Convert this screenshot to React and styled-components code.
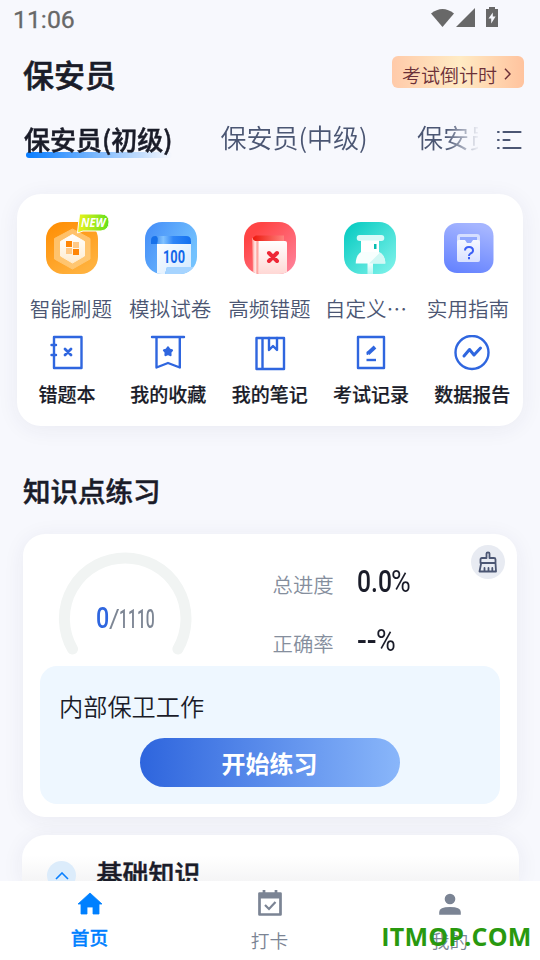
import React from 'react';
import styled, { createGlobalStyle } from 'styled-components';

const cjk = '"Noto Sans CJK SC", sans-serif';

const GlobalStyle = createGlobalStyle`
  * { box-sizing: border-box; }
  body { margin: 0; background: #f7f8fd; font-family: ${cjk}; }
  svg { display: block; flex: none; }
`;

const Screen = styled.div`
  width: 540px;
  height: 960px;
  overflow: hidden;
  display: flex;
  flex-direction: column;
  background: #f7f8fd;
  color: #1a1c29;
`;

const StatusBar = styled.header`
  height: 40px;
  flex: none;
  display: flex;
  align-items: flex-start;
  justify-content: space-between;
  padding: 5px 41px 0 13px;
  color: #686868;
  svg { margin-top: 2px; }
`;

const Clock = styled.time`
  font: 400 24.8px/30px Roboto, sans-serif;
  -webkit-text-stroke: 0.3px currentColor;
`;

const TitleBar = styled.div`
  height: 70px;
  flex: none;
  display: flex;
  align-items: flex-start;
  justify-content: space-between;
  padding: 13px 16px 0 23px;
`;

const PageTitle = styled.h1`
  margin: 0;
  font-size: 31px;
  line-height: 42px;
  font-weight: 500;
  -webkit-text-stroke: 0.6px currentColor;
`;

const Countdown = styled.div`
  width: 132px;
  height: 32px;
  margin-top: 3px;
  padding: 3px 0 0 10px;
  display: flex;
  gap: 7px;
  border-radius: 6px;
  background: linear-gradient(90deg, #ffcaa9, #ffebc4 51%, #ffc39e);
  color: #6c3038;
  font-size: 19px;
  line-height: 32px;
  font-weight: 350;
  svg { margin-top: 9px; }
`;

const TabBar = styled.nav`
  height: 84px;
  flex: none;
  display: flex;
  padding: 8px 18px 0 24px;
`;

const TabList = styled.div`
  width: 454px;
  display: flex;
  gap: 48.5px;
  overflow: hidden;
  mask-image: linear-gradient(90deg, #000 422px, transparent 456px);
`;

const Tab = styled.div`
  position: relative;
  z-index: 0;
  flex: none;
  width: 148px;
  height: 40px;
  white-space: nowrap;
  font-size: 26px;
  line-height: ${p => (p.$active ? 41 : 37)}px;
  font-weight: ${p => (p.$active ? 500 : 350)};
  -webkit-text-stroke: ${p => (p.$active ? 0.5 : 0)}px currentColor;
  color: ${p => (p.$active ? '#1a1c29' : '#4b5673')};
`;

const TabUnderline = styled.i`
  position: absolute;
  z-index: -1;
  left: 1.5px;
  top: 33.5px;
  width: 146px;
  height: 6px;
  border-radius: 3px;
  background: linear-gradient(90deg, #087cff, rgba(8, 124, 255, 0.6) 40%, rgba(8, 124, 255, 0));
`;

const MenuButton = styled.div`
  padding: 11px 0 0 17.5px;
  color: #4b5673;
`;

const Panel = styled.section`
  flex: none;
  background: #fff;
  box-shadow: 0 3px 22px rgba(45, 48, 90, 0.065);
`;

const Shortcuts = styled(Panel)`
  width: 506px;
  height: 232px;
  margin-left: 17px;
  border-radius: 24px;
  padding-top: 28px;
`;

const FeatureRow = styled.div`
  display: grid;
  grid-template-columns: repeat(5, 99.3px);
  padding-left: 5px;
`;

const Feature = styled.div`
  display: flex;
  flex-direction: column;
  align-items: center;
`;

const FeatureIcon = styled.div`
  position: relative;
  width: 52px;
  height: 52px;
`;

const NewBadge = styled.div`
  position: absolute;
  left: 30px;
  top: -9px;
  width: 34px;
  height: 20px;
  svg { overflow: visible; }
`;

const FeatureLabel = styled.div`
  margin-top: 19px;
  transform: translateX(${p => p.$shift || -0.8}px);
  font-size: 20.6px;
  line-height: 30px;
  font-weight: 350;
  color: #4b5673;
  white-space: nowrap;
`;

const ToolRow = styled.div`
  display: grid;
  grid-template-columns: repeat(5, 101.3px);
  margin-top: 11.5px;
  margin-left: -0.6px;
`;

const Tool = styled.div`
  display: flex;
  flex-direction: column;
  align-items: center;
  font-size: 19px;
  line-height: 28px;
  font-weight: 500;
  -webkit-text-stroke: 0.2px currentColor;
  svg { margin-bottom: 9.5px; }
`;

const SectionTitle = styled.h2`
  flex: none;
  margin: 44px 0 24px 23px;
  font-size: 27.5px;
  line-height: 40px;
  font-weight: 500;
  -webkit-text-stroke: 0.5px currentColor;
`;

const Practice = styled(Panel)`
  width: 494px;
  height: 283px;
  margin-left: 23px;
  border-radius: 22px;
  padding: 0 17px;
`;

const Summary = styled.div`
  height: 131.5px;
  display: flex;
  align-items: flex-start;
`;

const Gauge = styled.div`
  width: 134px;
  height: 131px;
  margin-left: 18px;
  display: grid;
  svg, div { grid-area: 1 / 1; }
`;

const GaugeText = styled.div`
  display: flex;
  align-items: baseline;
  padding: 65.5px 0 0 37.5px;
  color: #7d8694;
  font: 400 25px/36px Roboto, sans-serif;
`;

const Narrow = styled.span`
  width: ${p => p.$w}px;
  white-space: nowrap;
  font-weight: ${p => (p.$bold ? 500 : 400)};
  transform: scaleX(${p => p.$x});
  transform-origin: 0 50%;
`;

const Current = styled(Narrow)`
  color: #2f66df;
  font-size: 29.5px;
`;

const Stats = styled.dl`
  width: 198px;
  margin: 31px 0 0 80.500px;
  display: grid;
  grid-template-columns: 84px 1fr;
  grid-auto-rows: 59px;
`;

const StatName = styled.dt`
  padding-top: 4px;
  font-size: 20.4px;
  line-height: 30px;
  font-weight: 350;
  color: #858e9d;
`;

const StatValue = styled.dd`
  margin: 0;
  display: flex;
  font: 400 30.5px/34px Roboto, sans-serif;
`;

const CleanButton = styled.div`
  width: 34px;
  height: 34px;
  flex: none;
  margin: 11px -10px 0 0.5px;
  border-radius: 50%;
  background: #e8ebf2;
  display: grid;
  place-items: center;
`;

const Chapter = styled.div`
  height: 138.5px;
  border-radius: 17px;
  background: #eef7ff;
  padding-top: 23px;
  display: flex;
  flex-direction: column;
  align-items: center;
`;

const ChapterName = styled.div`
  align-self: stretch;
  padding-left: 19px;
  font-size: 24.2px;
  line-height: 34px;
  font-weight: 350;
`;

const StartButton = styled.button`
  width: 260px;
  height: 49px;
  margin-top: 15px;
  padding: 1px 1px 0 0;
  border: 0;
  border-radius: 25px;
  background: linear-gradient(90deg, #2e65dd, #89b6fa);
  color: #fff;
  font: 700 24px/48px ${cjk};
`;

const NextPanel = styled(Panel)`
  width: 497px;
  height: 46px;
  margin: 18px 0 0 22px;
  border-radius: 24px 24px 0 0;
  background: linear-gradient(#fff 45%, #f5f5f6);
  padding: 18px 25px 0;
  display: flex;
  gap: 20.5px;
  overflow: hidden;
`;

const Toggle = styled.div`
  width: 29px;
  height: 29px;
  margin-top: 8px;
  border-radius: 50%;
  background: #dcecfb;
  display: grid;
  place-items: center;
`;

const NextTitle = styled.h3`
  margin: 0;
  font-size: 26px;
  line-height: 40px;
  font-weight: 500;
  -webkit-text-stroke: 0.5px currentColor;
`;

const BottomNav = styled.nav`
  flex: none;
  height: 80px;
  background: #fff;
  display: grid;
  grid-template-columns: repeat(3, 180px);
  position: relative;
`;

const NavItem = styled.div`
  display: flex;
  flex-direction: column;
  align-items: center;
  padding-top: 8px;
  font-size: 18.7px;
  line-height: 28px;
  font-weight: ${p => (p.$active ? 500 : 350)};
  -webkit-text-stroke: ${p => (p.$active ? 0.3 : 0)}px currentColor;
  color: ${p => (p.$active ? '#0080ff' : '#7b8494')};
  span { margin: ${p => (p.$active ? 4 : 6.5)}px 1px 0 0; }
`;

const Watermark = styled.div`
  position: absolute;
  right: 8.500px;
  top: 40px;
  color: #29990f;
  font: 700 25px/30px "Open Sans", sans-serif;
  letter-spacing: 0.2px;
  white-space: nowrap;
`;

const StatusIcons = () => (
  <svg width="68" height="20" viewBox="0 0 68 20" fill="#686868">
    <path d="M0 5.500Q11.500-3.500 23 5.500L11.500 19Z" transform="translate(0 1)" />
    <path d="M25 20L44 1V20Z" />
    <path d="M55 2h3V0h6v2h3v18H55Z" />
    <path d="M61.800 5.500L57.500 11.500H60.200V16.500L64.600 9.500H61.800Z" fill="#f7f8fd" />
  </svg>
);

const NewTag = () => (
  <svg width="34" height="20" viewBox="0 0 34 20">
    <defs>
      <linearGradient id="tag" x2="1"><stop stopColor="#eff31a" /><stop offset=".5" stopColor="#a9ea1c" /><stop offset="1" stopColor="#5fe01a" /></linearGradient>
    </defs>
    <path d="M3.500 1H25Q33 1 33 9T25 18H7L1.500 20Z" fill="url(#tag)" stroke="#fff" strokeWidth="1" />
    <text x="5" y="13.900" textLength="24.500" lengthAdjust="spacingAndGlyphs" fontFamily="Open Sans, sans-serif" fontStyle="italic" fontWeight="700" fontSize="13" fill="#fff">NEW</text>
  </svg>
);

const SmartIcon = () => (
  <svg width="52" height="52" viewBox="0 0 52 52">
    <defs>
      <linearGradient id="or" x2=".6" y2="1"><stop stopColor="#ff8c00" /><stop offset="1" stopColor="#ffb13d" /></linearGradient>
      <linearGradient id="hex" x2="0" y2="1"><stop stopColor="#fff" /><stop offset="1" stopColor="#ffecd0" /></linearGradient>
    </defs>
    <rect width="52" height="52" rx="17" fill="url(#or)" />
    <path d="M26.500 7L44 16.500V37L26.500 47L8.500 37V16.500Z" fill="#ffcf86" opacity=".75" stroke="#ffcf86" strokeLinejoin="round" />
    <path d="M26.500 12.500L38.500 19.500V34L26.500 41L14.500 34V19.500Z" fill="url(#hex)" stroke="url(#hex)" strokeLinejoin="round" />
    <path d="M20 19h6v6h-6ZM27 27h6v6h-6Z" fill="#ff8505" />
    <path d="M27 20h6v6h-6ZM20 26h6v6h-6Z" fill="#ffc987" />
  </svg>
);

const ExamIcon = () => (
  <svg width="52" height="52" viewBox="0 0 52 52">
    <defs>
      <linearGradient id="bl" x2="1" y2=".5"><stop stopColor="#438cf8" /><stop offset="1" stopColor="#73c2fe" /></linearGradient>
      <linearGradient id="roll" x2="1"><stop stopColor="#2378e8" /><stop offset=".3" stopColor="#81c2ff" /><stop offset=".55" stopColor="#2f86f7" /><stop offset="1" stopColor="#1370ef" /></linearGradient>
      <linearGradient id="sheet" x2="1" y2="1"><stop stopColor="#fff" /><stop offset="1" stopColor="#d2e9ff" /></linearGradient>
      <clipPath id="cb"><rect width="52" height="52" rx="17" /></clipPath>
    </defs>
    <g clipPath="url(#cb)">
      <rect width="52" height="52" fill="url(#bl)" />
      <path d="M12 18h34v27H22l-2 7h-8Z" fill="url(#sheet)" />
      <path d="M22 45h28l-3 7H20Z" fill="#a6d4ff" />
      <path d="M10 14h31q5 0 5 5v3H12q0-3-4-1q-4-7 2-7Z" fill="url(#roll)" />
      <path d="M6 19q0-5 5-5q3 1 1 8H6Z" fill="#1670ea" />
    </g>
    <text x="18" y="41" textLength="22" lengthAdjust="spacingAndGlyphs" fontFamily="Roboto, sans-serif" fontSize="17.500" fontWeight="700" fill="#1267ea">100</text>
  </svg>
);

const MistakeIcon = () => (
  <svg width="52" height="52" viewBox="0 0 52 52">
    <defs>
      <linearGradient id="re" x2="1" y2="1"><stop offset=".2" stopColor="#ff4545" /><stop offset="1" stopColor="#ff86a0" /></linearGradient>
      <linearGradient id="page" x2="0" y2="1"><stop stopColor="#fff" /><stop offset="1" stopColor="#ffd8d5" /></linearGradient>
      <linearGradient id="spine" x2="1"><stop stopColor="#ff8580" /><stop offset=".4" stopColor="#fff1ef" /><stop offset=".65" stopColor="#ff9d97" /><stop offset="1" stopColor="#fff" /></linearGradient>
      <linearGradient id="top" x2="1"><stop stopColor="#ed180c" /><stop offset="1" stopColor="#ff827e" /></linearGradient>
      <clipPath id="cr"><rect width="52" height="52" rx="17" /></clipPath>
    </defs>
    <g clipPath="url(#cr)">
      <rect width="52" height="52" fill="url(#re)" />
      <path d="M8 16h8v36H9Z" fill="url(#spine)" />
      <path d="M15 19h26q2 0 2 2v29l-2 2H15Z" fill="url(#page)" />
      <path d="M12 13.500H40V19H11q-5-3 1-5.500Z" fill="url(#top)" />
    </g>
    <path d="M25 31l8 8m0-8l-8 8" stroke="#ee2737" strokeWidth="4" strokeLinecap="round" />
  </svg>
);

const PinIcon = () => (
  <svg width="52" height="52" viewBox="0 0 52 52">
    <defs>
      <linearGradient id="te" x2="1" y2="1"><stop stopColor="#00c9bf" /><stop offset="1" stopColor="#84f4ec" /></linearGradient>
      <linearGradient id="stem" x2="0" y2="1"><stop stopColor="#fff" /><stop offset="1" stopColor="#b3f7f2" /></linearGradient>
    </defs>
    <rect width="52" height="52" rx="17" fill="url(#te)" />
    <path d="M23.500 40h5.500v12h-5.500Z" fill="url(#stem)" />
    <rect x="12.700" y="13" width="27.600" height="6" rx="3" fill="#d7faf8" />
    <path d="M17 18.500h18v12h-18Z" fill="#fff" />
    <path d="M17 30h18q6 3 6.300 11.500H11.700Q12 33 17 30Z" fill="#f7fffe" />
    <path d="M25 41.500l11-11q5 3 5.300 11Z" fill="#d2f8f5" />
    <path d="M30 22h2.500v5h-2.500Z" fill="#08bcb0" />
  </svg>
);

const GuideIcon = () => (
  <svg width="52" height="52" viewBox="0 0 52 52">
    <defs>
      <linearGradient id="vi" x1=".5" x2=".2" y2="1"><stop stopColor="#a5b5ff" /><stop offset="1" stopColor="#6482ff" /></linearGradient>
      <linearGradient id="bag" x2="0" y2="1"><stop stopColor="#f6f8ff" /><stop offset="1" stopColor="#d9e1ff" /></linearGradient>
    </defs>
    <rect x="1" y="1" width="49.500" height="50" rx="13" fill="url(#vi)" />
    <rect x="14" y="12" width="23" height="15" rx="3" fill="#d5deff" />
    <path d="M17 15h17v6H17Z" fill="#91a8ff" />
    <path d="M16 18h6l2 3h4l2-3h5q2 0 2 2v18q0 2-2 2H16q-2 0-2-2V20q0-2 2-2Z" fill="url(#bag)" />
    <path d="M22 28.500q0-3.500 4-3.500t4 3.500q0 2-2.500 3-1.500 1-1.500 2.500M26 35v2.200" fill="none" stroke="#3c5ff6" strokeWidth="2" />
  </svg>
);

const ToolIcon = ({ children }) => (
  <svg width="36" height="36" viewBox="0 0 36 36" fill="none" stroke="#2f66df" strokeWidth="2.400" strokeLinejoin="round" strokeLinecap="round">{children}</svg>
);

const features = [
  { label: '智能刷题', Icon: SmartIcon, isNew: true },
  { label: '模拟试卷', Icon: ExamIcon },
  { label: '高频错题', Icon: MistakeIcon },
  { label: '自定义⋯', Icon: PinIcon, shift: -3.5 },
  { label: '实用指南', Icon: GuideIcon },
];

const tools = [
  ['错题本', <><path d="M5 2H32.500V33H5Z" /><path d="M2.500 10H7M2.500 20H7" /><path d="M16 14l6 6m0-6l-6 6" strokeWidth="2.800" /></>],
  ['我的收藏', <><path d="M2 2H34M6.500 2V32.500L18 28L29.800 32.500V2" /><path d="M18 12.500l1.300 2.200 2.600.6-1.700 2 .2 2.700-2.400-1-2.400 1 .2-2.700-1.700-2 2.600-.6Z" fill="#2f66df" /></>],
  ['我的笔记', <><path d="M4.500 3H32V34H4.500ZM10.500 3V34" /><path d="M17 3V15L21 11L25 15V3" /></>],
  ['考试记录', <><path d="M5 2H31V33H5Z" /><path d="M13.500 25H23" strokeLinecap="butt" /><path d="M15 18.500L22 12" strokeWidth="3.800" strokeLinecap="butt" /><path d="M14.500 19V17.500" strokeWidth="2" /></>],
  ['数据报告', <><circle cx="18" cy="17.500" r="16.500" /><path d="M10 21L15.500 14.500L20 20L26.500 13" strokeWidth="3" /></>],
];

export default function App() {
  return (
    <Screen>
      <GlobalStyle />
      <StatusBar><Clock>11:06</Clock><StatusIcons /></StatusBar>
      <TitleBar>
        <PageTitle>保安员</PageTitle>
        <Countdown>
          考试倒计时
          <svg width="7" height="12" viewBox="0 0 7 12" fill="none" stroke="currentColor" strokeWidth="1.500"><path d="M1 .8L6 6L1 11.200" /></svg>
        </Countdown>
      </TitleBar>
      <TabBar>
        <TabList>
          <Tab $active><TabUnderline />保安员(初级)</Tab>
          <Tab>保安员(中级)</Tab>
          <Tab>保安员(高级)</Tab>
        </TabList>
        <MenuButton>
          <svg width="26" height="21" viewBox="0 0 26 21" fill="none" stroke="currentColor" strokeWidth="2.200" strokeLinecap="round"><path d="M2 3h.7M7.500 3H24.500M2 11h.7M7.500 11H13.500M2 19h.7M7.500 19H24.500" /></svg>
        </MenuButton>
      </TabBar>
      <Shortcuts>
        <FeatureRow>
          {features.map(({ label, Icon, isNew, shift }) => (
            <Feature key={label}>
              <FeatureIcon><Icon />{isNew && <NewBadge><NewTag /></NewBadge>}</FeatureIcon>
              <FeatureLabel $shift={shift}>{label}</FeatureLabel>
            </Feature>
          ))}
        </FeatureRow>
        <ToolRow>
          {tools.map(([label, icon]) => <Tool key={label}><ToolIcon>{icon}</ToolIcon>{label}</Tool>)}
        </ToolRow>
      </Shortcuts>
      <SectionTitle>知识点练习</SectionTitle>
      <Practice>
        <Summary>
          <Gauge>
            <svg width="134" height="122" viewBox="0 0 134 122" fill="none"><path d="M14.500 115A60.800 60.800 0 1 1 119.900 115" stroke="#f1f4f3" strokeWidth="11" strokeLinecap="round" /></svg>
            <GaugeText>
              <Current $bold $w={13} $x={0.79}>0</Current>
              <Narrow $w={10.5} $x={1.05}>/</Narrow>
              <Narrow $bold $w={36} $x={0.63}>1110</Narrow>
            </GaugeText>
          </Gauge>
          <Stats>
            <StatName>总进度</StatName>
            <StatValue><Narrow $bold $w={34.5} $x={0.81}>0.0</Narrow><Narrow $w={20} $x={0.88}>%</Narrow></StatValue>
            <StatName>正确率</StatName>
            <StatValue><Narrow $bold $w={19} $x={0.95}>--</Narrow><Narrow $w={20} $x={0.88}>%</Narrow></StatValue>
          </Stats>
          <CleanButton>
            <svg width="20" height="22" viewBox="0 0 20 22" fill="none" stroke="#4b5673" strokeWidth="1.800" strokeLinejoin="round" strokeLinecap="round"><path d="M8.500 7V2.500Q8.500 1.500 10 1.500T11.500 2.500V7H16Q17.500 7 17.500 8.500V12H2.500V8.500Q2.500 7 4 7ZM3.200 12L1.500 20.500H18L17.500 12M6.500 20V17M10.500 20V17M14.300 20V17" /></svg>
          </CleanButton>
        </Summary>
        <Chapter>
          <ChapterName>内部保卫工作</ChapterName>
          <StartButton>开始练习</StartButton>
        </Chapter>
      </Practice>
      <NextPanel>
        <Toggle><svg width="14" height="8" viewBox="0 0 14 8" fill="none" stroke="#0a80ff" strokeWidth="1.600"><path d="M1 7L7 1L13 7" /></svg></Toggle>
        <NextTitle>基础知识</NextTitle>
      </NextPanel>
      <BottomNav>
        <NavItem $active>
          <svg width="26" height="30" viewBox="0 0 26 30" fill="currentColor"><path d="M13 4L1 15H4V25H10V18H16V25H22V15H25Z" stroke="currentColor" strokeWidth=".8" strokeLinejoin="round" /></svg>
          <span>首页</span>
        </NavItem>
        <NavItem>
          <svg width="26" height="30" viewBox="0 0 26 30" fill="none" stroke="currentColor" strokeWidth="2.700"><path d="M2.500 4.500H23.500V25.500H2.500Z" strokeLinejoin="round" /><path d="M2 7H24" strokeWidth="5" /><path d="M7 1V6M19 1V6" /><path d="M8 16L12 20L18.500 13" strokeWidth="2.200" /></svg>
          <span>打卡</span>
        </NavItem>
        <NavItem>
          <svg width="26" height="30" viewBox="0 0 26 30" fill="currentColor"><circle cx="13" cy="10" r="5.300" /><path d="M2.200 25.800V23Q2.200 18 13 18T23.800 23V25.800Z" /></svg>
          <span>我的</span>
        </NavItem>
        <Watermark>ITMOP.COM</Watermark>
      </BottomNav>
    </Screen>
  );
}
